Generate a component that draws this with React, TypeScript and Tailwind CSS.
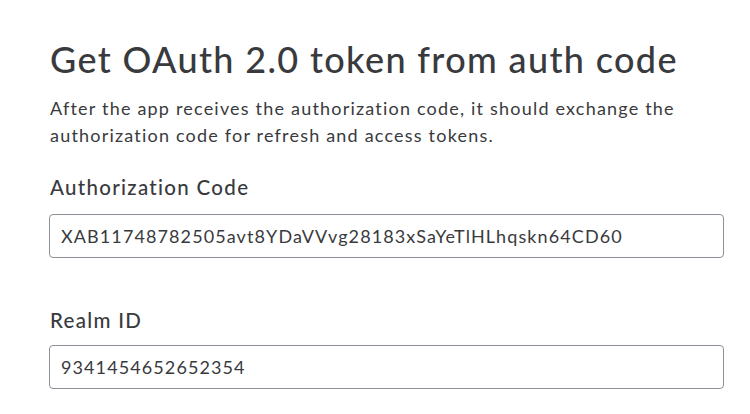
import React from 'react';

export default function App() {
  return (
    <div className="min-h-screen bg-white text-[#393a3d] font-['Lato',_'Liberation_Sans',_sans-serif]">
      <div className="pl-[49px] pt-[38px] w-[724px]">
        {/* Heading */}
        <h1 className="text-[36px] leading-[43px] font-medium tracking-[1.35px] pl-px">
          Get OAuth 2.0 token from auth code
        </h1>
        <p className="mt-[14px] text-[18px] leading-[27px] tracking-[1.2px] pl-px">
          After the app receives the authorization code, it should exchange the authorization code for refresh and
          access tokens.
        </p>

        {/* Authorization code field */}
        <label className="block mt-[24px] text-[20.5px] leading-[28px] font-medium tracking-[1.3px] pl-px">
          Authorization Code
        </label>
        <input
          readOnly
          value="XAB11748782505avt8YDaVVvg28183xSaYeTlHLhqskn64CD60"
          className="mt-[13px] block w-[675px] h-[44px] rounded-[4px] border border-[#8d9096] px-[11px] text-[18px] tracking-[1.1px] text-[#393a3d] outline-none"
        />

        {/* Realm field */}
        <label className="block mt-[48px] text-[20.5px] leading-[28px] font-medium tracking-[1.3px] pl-px">
          Realm ID
        </label>
        <input
          readOnly
          value="9341454652652354"
          className="mt-[11px] block w-[675px] h-[44px] rounded-[4px] border border-[#8d9096] px-[11px] text-[18px] tracking-[1.1px] text-[#393a3d] outline-none"
        />
      </div>
    </div>
  );
}
